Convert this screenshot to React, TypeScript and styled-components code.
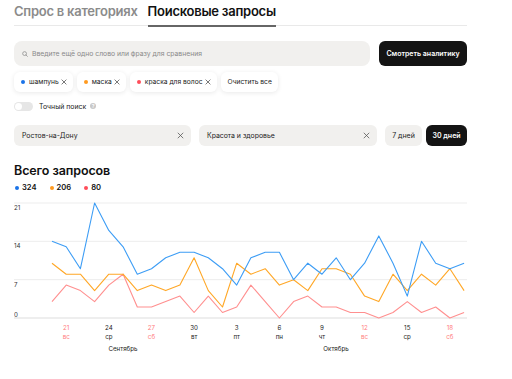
import React from "react";
import styled, { createGlobalStyle } from "styled-components";

const Global = createGlobalStyle`
  html, body { margin: 0; padding: 0; background: #fff; }
  body { font-family: Inter, "Noto Sans", sans-serif; color: #111; }
  * { box-sizing: border-box; }
`;

const Page = styled.div`
  width: 512px;
  height: 379px;
  overflow: hidden;
  padding: 0 45px 0 14px;
`;

const Tabs = styled.div`
  display: flex;
  gap: 10px;
  padding-top: 2px;
  border-bottom: 1px solid #e9e9e9;
  height: 26px;
`;

const Tab = styled.div<{ $active?: boolean }>`
  font-size: 13px;
  font-weight: 600;
  letter-spacing: -0.25px;
  line-height: 18px;
  height: 25px;
  color: ${(p) => (p.$active ? "#111" : "#8b8b8b")};
  border-bottom: 2px solid ${(p) => (p.$active ? "#666" : "transparent")};
  margin-bottom: -1px;
  white-space: nowrap;
`;

const SearchRow = styled.div`
  display: flex;
  gap: 9px;
  margin-top: 15px;
  height: 25px;
`;

const SearchBox = styled.div`
  flex: 0 0 356px;
  background: #f1f0ee;
  border-radius: 8px;
  display: flex;
  align-items: center;
  gap: 4px;
  padding-left: 8px;
  font-size: 6.8px;
  color: #8a8a8a;
`;

const DarkButton = styled.div<{ $w: number }>`
  flex: 0 0 ${(p) => p.$w}px;
  background: #141414;
  color: #fff;
  border-radius: 6px;
  font-size: 7px;
  font-weight: 600;
  display: flex;
  align-items: center;
  justify-content: center;
  white-space: nowrap;
`;

const ChipRow = styled.div`
  display: flex;
  gap: 4px;
  margin-top: 6px;
  height: 20px;
`;

const Chip = styled.div`
  display: flex;
  align-items: center;
  gap: 2px;
  padding: 0 6px 0 7px;
  background: #fff;
  border-radius: 6px;
  box-shadow: 0 1px 5px rgba(0, 0, 0, 0.09);
  font-size: 6.7px;
  color: #222;
  white-space: nowrap;
`;

const Dot = styled.span<{ $c: string }>`
  width: 4px;
  height: 4px;
  border-radius: 50%;
  background: ${(p) => p.$c};
  flex: 0 0 4px;
  margin-right: 2px;
`;

const ToggleRow = styled.div`
  display: flex;
  align-items: center;
  gap: 6px;
  margin-top: 9px;
  height: 10px;
  font-size: 6.9px;
  color: #222;
`;

const Toggle = styled.div`
  width: 19px;
  height: 9px;
  border-radius: 5px;
  background: #e6e6e6;
  display: flex;
  align-items: center;
  padding-left: 1px;
`;

const Knob = styled.div`
  width: 7px;
  height: 7px;
  border-radius: 50%;
  background: #fff;
`;

const Info = styled.span`
  width: 6px;
  height: 6px;
  border-radius: 50%;
  background: #c8c8c8;
  color: #fff;
  font-size: 5px;
  font-weight: 700;
  display: inline-flex;
  align-items: center;
  justify-content: center;
  margin-left: -2px;
`;

const FilterRow = styled.div`
  display: flex;
  gap: 8px;
  margin-top: 14px;
  height: 21px;
`;

const Select = styled.div<{ $w: number }>`
  flex: 0 0 ${(p) => p.$w}px;
  background: #f1f0ee;
  border-radius: 6px;
  display: flex;
  align-items: center;
  justify-content: space-between;
  padding: 0 7px 0 8px;
  font-size: 6.9px;
  color: #222;
`;

const Periods = styled.div`
  display: flex;
  gap: 4px;
`;

const Period = styled.div<{ $active?: boolean; $w: number }>`
  width: ${(p) => p.$w}px;
  border-radius: 6px;
  background: ${(p) => (p.$active ? "#141414" : "#f1f0ee")};
  color: ${(p) => (p.$active ? "#fff" : "#222")};
  font-weight: ${(p) => (p.$active ? 600 : 400)};
  font-size: 7px;
  display: flex;
  align-items: center;
  justify-content: center;
`;

const Title = styled.div`
  margin-top: 17px;
  font-size: 12.5px;
  font-weight: 600;
  line-height: 16px;
  letter-spacing: -0.1px;
`;

const Legend = styled.div`
  display: flex;
  gap: 13px;
  margin-top: 3px;
  height: 11px;
  align-items: center;
  padding-left: 1px;
`;

const LegendItem = styled.div`
  display: flex;
  align-items: center;
  gap: 1px;
  font-size: 7.6px;
  font-weight: 600;
`;

const ChartSvg = styled.svg`
  display: block;
  margin-top: 2px;
`;

const XIcon = ({ s = 6, c = "#333" }: { s?: number; c?: string }) => (
  <svg width={s} height={s} viewBox="0 0 10 10">
    <path d="M1.5 1.5 L8.5 8.5 M8.5 1.5 L1.5 8.5" stroke={c} strokeWidth="1.1" strokeLinecap="round" />
  </svg>
);

const SearchIcon = () => (
  <svg width="6" height="6" viewBox="0 0 10 10">
    <circle cx="4.3" cy="4.3" r="3.2" fill="none" stroke="#888" strokeWidth="1.2" />
    <path d="M6.7 6.7 L9 9" stroke="#888" strokeWidth="1.2" strokeLinecap="round" />
  </svg>
);

const blue = [14, 13, 9, 21, 16, 13, 8, 9, 11, 12, 12, 11, 9, 6, 11, 12, 12, 7, 10, 8, 11, 7, 10, 15, 10, 4, 14, 10, 9, 10];
const orange = [10, 8, 8, 5, 8, 8, 5, 6, 5, 6, 11, 5, 2, 10, 8, 9, 6, 7, 5, 9, 9, 8, 4, 3, 8, 5, 8, 6, 9, 5];
const red = [3, 6, 5, 3, 6, 8, 2, 2, 3, 4, 1, 4, 1, 2, 6, 3, 0, 3, 4, 2, 2, 1, 1, 0, 1, 3, 1, 2, 0, 1];

const TOP = 8;
const ZERO = 123;
const X0 = 38;
const DX = 14.21;
const py = (v: number) => ZERO - (v * (ZERO - TOP)) / 21;
const px = (i: number) => X0 + i * DX;
const pts = (d: number[]) => d.map((v, i) => `${px(i).toFixed(1)},${py(v).toFixed(1)}`).join(" ");

const ticks = [
  { i: 1, d: "21", w: "вс", red: true },
  { i: 4, d: "24", w: "ср" },
  { i: 7, d: "27", w: "сб", red: true },
  { i: 10, d: "30", w: "вт" },
  { i: 13, d: "3", w: "пт" },
  { i: 16, d: "6", w: "пн" },
  { i: 19, d: "9", w: "чт" },
  { i: 22, d: "12", w: "вс", red: true },
  { i: 25, d: "15", w: "ср" },
  { i: 28, d: "18", w: "сб", red: true },
];

const yLabels = [
  { t: "21", y: 15 },
  { t: "14", y: 53 },
  { t: "7", y: 92 },
  { t: "0", y: 122 },
];

const Chart = () => (
  <ChartSvg width="453" height="164" viewBox="0 0 453 164">
    {[21, 14, 7].map((v) => (
      <line key={v} x1="0" x2="453" y1={py(v)} y2={py(v)} stroke="#ededed" strokeWidth="1" />
    ))}
    <line x1="0" x2="453" y1={ZERO} y2={ZERO} stroke="#eeeeee" strokeWidth="2" />
    {yLabels.map((l) => (
      <text key={l.t} x="0" y={l.y} fontSize="6.2" fill="#333" fontFamily="Inter, sans-serif">
        {l.t}
      </text>
    ))}
    <polyline points={pts(red)} fill="none" stroke="#ff8f8f" strokeWidth="1.1" strokeLinejoin="round" />
    <polyline points={pts(orange)} fill="none" stroke="#ffa726" strokeWidth="1.1" strokeLinejoin="round" />
    <polyline points={pts(blue)} fill="none" stroke="#3d9df5" strokeWidth="1.1" strokeLinejoin="round" />
    {ticks.map((t) => (
      <g key={t.i} fill={t.red ? "#ff7d7d" : "#222"} fontSize="6.2" fontFamily="Inter, sans-serif" textAnchor="middle">
        <text x={px(t.i)} y="135">{t.d}</text>
        <text x={px(t.i)} y="144">{t.w}</text>
      </g>
    ))}
    <text x="109" y="156" fontSize="6.2" fill="#222" textAnchor="middle" fontFamily="Inter, sans-serif">Сентябрь</text>
    <text x="322" y="156" fontSize="6.2" fill="#222" textAnchor="middle" fontFamily="Inter, sans-serif">Октябрь</text>
  </ChartSvg>
);

export default function App() {
  return (
    <Page>
      <Global />
      <Tabs>
        <Tab>Спрос в категориях</Tab>
        <Tab $active>Поисковые запросы</Tab>
      </Tabs>
      <SearchRow>
        <SearchBox>
          <SearchIcon />
          Введите ещё одно слово или фразу для сравнения
        </SearchBox>
        <DarkButton $w={88}>Смотреть аналитику</DarkButton>
      </SearchRow>
      <ChipRow>
        <Chip>
          <Dot $c="#1a73e8" />
          шампунь <XIcon />
        </Chip>
        <Chip>
          <Dot $c="#ff9a1f" />
          маска <XIcon />
        </Chip>
        <Chip>
          <Dot $c="#ff4d5a" />
          краска для волос <XIcon />
        </Chip>
        <Chip>Очистить все</Chip>
      </ChipRow>
      <ToggleRow>
        <Toggle>
          <Knob />
        </Toggle>
        Точный поиск
        <Info>?</Info>
      </ToggleRow>
      <FilterRow>
        <Select $w={177}>
          Ростов-на-Дону <XIcon s={7} c="#555" />
        </Select>
        <Select $w={178}>
          Красота и здоровье <XIcon s={7} c="#555" />
        </Select>
        <Periods>
          <Period $w={37}>7 дней</Period>
          <Period $w={41} $active>
            30 дней
          </Period>
        </Periods>
      </FilterRow>
      <Title>Всего запросов</Title>
      <Legend>
        <LegendItem>
          <Dot $c="#1a73e8" />
          324
        </LegendItem>
        <LegendItem>
          <Dot $c="#ff9a1f" />
          206
        </LegendItem>
        <LegendItem>
          <Dot $c="#ff4d5a" />
          80
        </LegendItem>
      </Legend>
      <Chart />
    </Page>
  );
}
